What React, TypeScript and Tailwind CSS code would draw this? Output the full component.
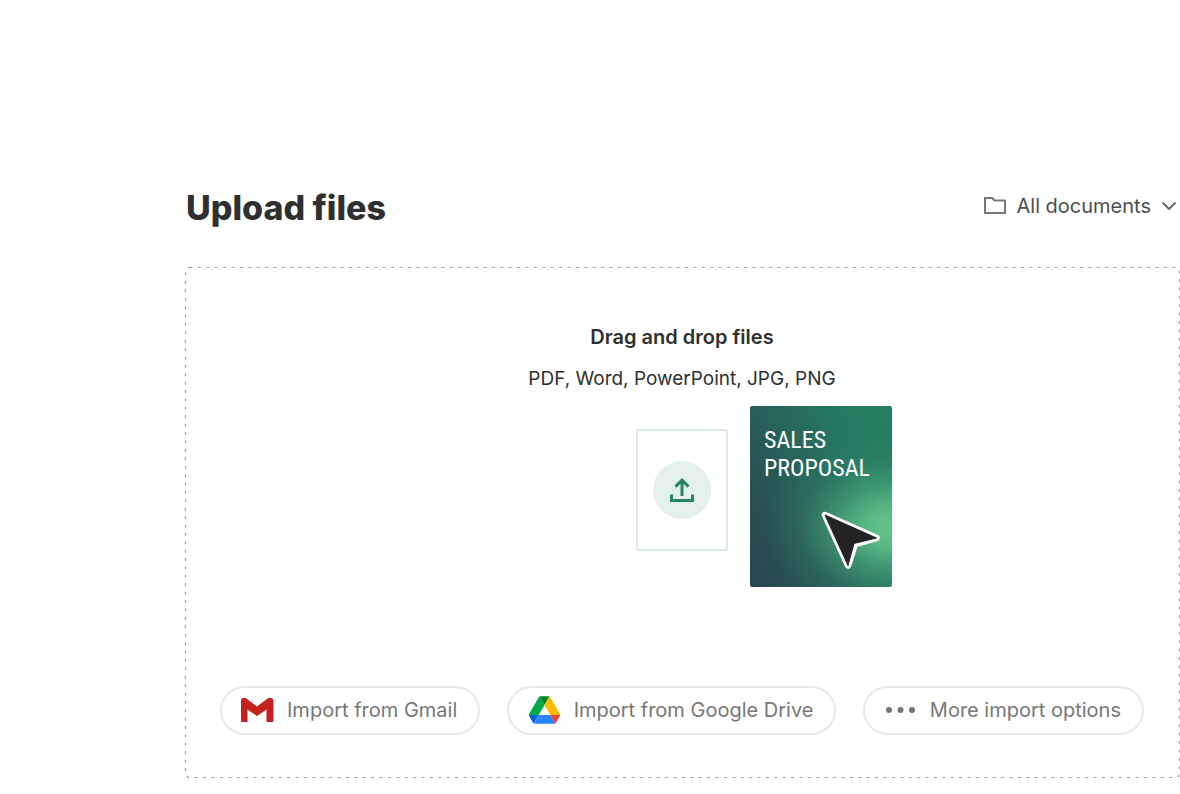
import { useState } from "react";
import type { ReactNode } from "react";

function FolderIcon() {
  return (
    <svg width="22" height="18" viewBox="0 0 22 18" fill="none" stroke="#777777" strokeWidth="2" aria-hidden="true">
      <path d="M1 1h7l2.500 2.500H21V16H1z" />
    </svg>
  );
}

function ChevronIcon() {
  return (
    <svg width="16" height="10" viewBox="0 0 16 10" fill="none" stroke="#6b6b6b" strokeWidth="2" aria-hidden="true">
      <path d="M1.500 1.500 8 8l6.500-6.500" />
    </svg>
  );
}

function UploadIcon() {
  return (
    <svg width="26" height="26" viewBox="0 0 26 26" fill="none" stroke="#248567" strokeWidth="3" aria-hidden="true">
      <path d="M13 19V3.500M6.500 9.600 13 3.200l6.500 6.400M2.500 17.500v6h21v-6" />
    </svg>
  );
}

function GmailIcon() {
  return (
    <svg width="34" height="26" viewBox="0 0 34 26" fill="#c5221f" aria-hidden="true">
      <path d="M0 3.800C0 .8 3.200 0 5.400 1.600L16 9.400 26.600 1.600C28.800 0 32.500 .8 32.500 3.800V23.800c0 .8-.5 1.200-1.200 1.200H25.500V12.400l-9.500 6.600-9.500-6.600V25H1.200C.5 25 0 24.600 0 23.800z" />
    </svg>
  );
}

function DriveIcon() {
  return (
    <svg width="31" height="28" viewBox="0 0 87.300 78" aria-hidden="true">
      <path fill="#0066da" d="m6.600 66.850 3.850 6.650c.8 1.400 1.950 2.500 3.300 3.300l13.750-23.800h-27.500c0 1.550.4 3.100 1.200 4.500z" />
      <path fill="#00ac47" d="m43.650 25-13.750-23.800c-1.350.8-2.500 1.900-3.300 3.300l-25.400 44a9.060 9.060 0 0 0 -1.200 4.500h27.500z" />
      <path fill="#ea4335" d="m73.550 76.800c1.350-.8 2.500-1.900 3.300-3.300l1.600-2.750 7.650-13.250c.8-1.400 1.200-2.950 1.200-4.500h-27.502l5.852 11.500z" />
      <path fill="#00832d" d="m43.650 25 13.750-23.800c-1.350-.8-2.900-1.200-4.500-1.200h-18.500c-1.600 0-3.150.45-4.500 1.200z" />
      <path fill="#2684fc" d="m59.800 53h-32.300l-13.750 23.800c1.350.8 2.900 1.200 4.500 1.200h50.800c1.600 0 3.150-.45 4.500-1.200z" />
      <path fill="#ffba00" d="m73.400 26.500-12.700-22c-.8-1.400-1.950-2.500-3.300-3.300l-13.750 23.800 16.150 28h27.450c0-1.550-.4-3.100-1.200-4.500z" />
    </svg>
  );
}

function DotsIcon() {
  return (
    <svg width="30" height="6" viewBox="0 0 30 6" fill="#737373" aria-hidden="true">
      <circle cx="3" cy="3" r="3" />
      <circle cx="14.500" cy="3" r="3" />
      <circle cx="26" cy="3" r="3" />
    </svg>
  );
}

function CursorIcon() {
  return (
    <svg width="60" height="60" viewBox="0 0 60 60" aria-hidden="true">
      <path
        d="M4 4 55.500 27 34 33 27 54.500z"
        fill="#fff"
        stroke="#fff"
        strokeWidth="6.500"
        strokeLinejoin="round"
      />
      <path d="M4 4 55.500 27 33 32.500 27 54.500z" fill="#232323" stroke="#232323" strokeLinejoin="round" />
    </svg>
  );
}

// CSS dashed borders can't space the dashes this far apart
function DashedOutline() {
  return (
    <svg className="pointer-events-none absolute inset-0 size-full overflow-visible" aria-hidden="true">
      <rect
        x="0.500"
        y="0.500"
        rx="4"
        fill="none"
        stroke="#a0a0a0"
        strokeWidth="1.200"
        strokeDasharray="3 5.400"
        className="h-[calc(100%-1px)] w-[calc(100%-1px)]"
      />
    </svg>
  );
}

function ImportButton({ icon, children }: { icon: ReactNode; children: ReactNode }) {
  return (
    <button
      type="button"
      className="flex h-[49px] items-center gap-[11px] rounded-full border-2 border-[#e8e8e8] bg-white pr-[21px] pb-px pl-[18px] text-xl whitespace-nowrap text-[#777777] hover:bg-neutral-50"
    >
      <span className="flex w-9 justify-center">{icon}</span>
      {children}
    </button>
  );
}

export default function App() {
  const [folder, setFolder] = useState("all");

  return (
    <main className="min-h-screen bg-white pt-[184px] pb-4 pl-[185px] font-['Inter',sans-serif] text-[#2f2f2f]">
      <header className="flex h-12 items-center justify-between pr-[3px] pl-px">
        <h1 className="text-[34px] leading-12 font-extrabold">Upload files</h1>
        <div className="flex items-center gap-[10px] pb-1">
          <FolderIcon />
          <select
            aria-label="Folder"
            value={folder}
            onChange={(e) => setFolder(e.target.value)}
            className="appearance-none bg-transparent text-xl text-[#4d4d4d] [field-sizing:content]"
          >
            <option value="all">All documents</option>
          </select>
          <ChevronIcon />
        </div>
      </header>

      <section className="relative mt-[35px] flex flex-col items-center pt-[56px] pr-9 pb-[43px] pl-[35px]">
        <DashedOutline />
        <h2 className="text-xl leading-7 font-semibold">Drag and drop files</h2>
        <p className="mt-[14px] text-[19px] leading-7">PDF, Word, PowerPoint, JPG, PNG</p>

        <div className="relative mt-9">
          <label className="flex h-[122px] w-[92px] cursor-pointer items-center justify-center rounded-[3px] border-2 border-[#dbeae5]">
            <input type="file" multiple aria-label="Upload files" className="sr-only" />
            <span className="flex size-[58px] items-center justify-center rounded-full bg-[#e3f0ec]">
              <UploadIcon />
            </span>
          </label>

          {/* The document being dragged in, with the pointer on top */}
          <div className="absolute -top-[23px] left-[114px] h-[181px] w-[142px] rounded-xs bg-[radial-gradient(ellipse_125px_95px_at_98%_67%,#62c48a_0%,#5fc188e0_20%,#4dab7c90_45%,#36886a40_72%,transparent_100%),linear-gradient(245deg,#248061_0%,#257860_30%,#28605a_58%,#285052_80%,#284550_100%)] px-[14px] pt-5">
            <p className="font-['Roboto_Condensed','Roboto',sans-serif] text-2xl leading-7 text-white">
              SALES
              <br />
              PROPOSAL
            </p>
            <div className="absolute top-[105px] left-[71px]">
              <CursorIcon />
            </div>
          </div>
        </div>

        <div className="mt-[135px] flex w-full flex-wrap justify-between gap-y-4">
          <ImportButton icon={<GmailIcon />}>Import from Gmail</ImportButton>
          <ImportButton icon={<DriveIcon />}>Import from Google Drive</ImportButton>
          <ImportButton icon={<DotsIcon />}>More import options</ImportButton>
        </div>
      </section>
    </main>
  );
}
